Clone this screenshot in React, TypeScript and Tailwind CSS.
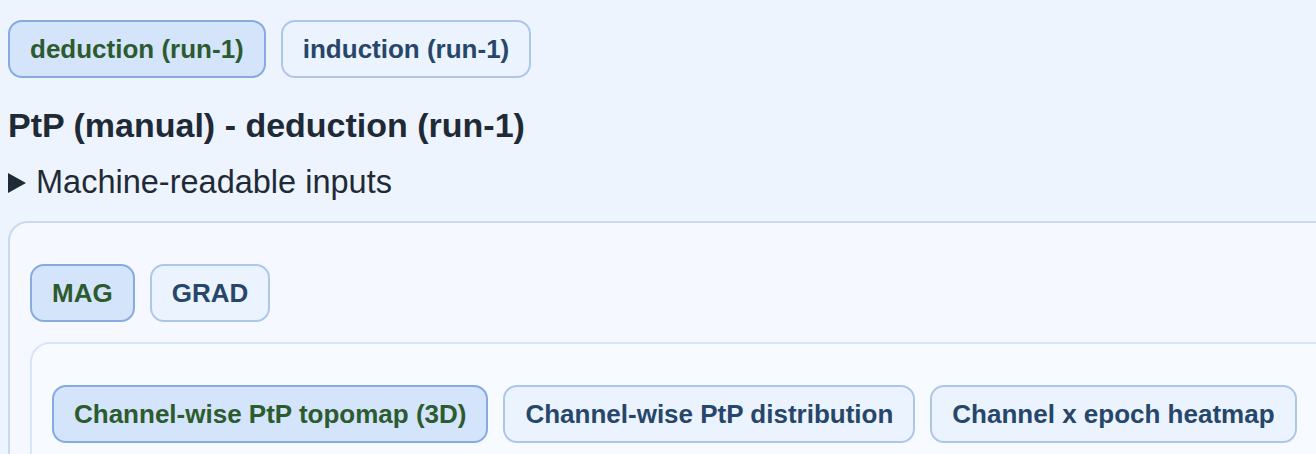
import React from "react";

const font = { fontFamily: '"Liberation Sans", Arial, Helvetica, sans-serif' };

function Btn({ label, active }: { label: string; active?: boolean }) {
  return (
    <button
      className={
        active
          ? "shrink-0 rounded-[14px] border-2 border-[#86abe0] bg-[#d4e4fb] px-[20px] py-[12px] text-[26px] font-bold leading-[30px] text-[#2c5b2f]"
          : "shrink-0 rounded-[14px] border-2 border-[#adc7ea] bg-[#ebf3fe] px-[20px] py-[12px] text-[26px] font-bold leading-[30px] text-[#27476a]"
      }
    >
      {label}
    </button>
  );
}

export default function App() {
  return (
    <div
      className="h-[454px] w-screen overflow-hidden bg-[#edf4fe] pl-[8px] pt-[20px]"
      style={font}
    >
      <div className="flex gap-[15px]">
        <Btn label="deduction (run-1)" active />
        <Btn label="induction (run-1)" />
      </div>
      <h3 className="mt-[28px] text-[34px] font-bold leading-[39px] text-[#1f2a37]">
        PtP (manual) - deduction (run-1)
      </h3>
      <div className="mt-[19px] flex items-center text-[32.5px] leading-[37px] text-[#1f2a37]">
        <svg width="18" height="20" viewBox="0 0 18 20" className="mr-[10px] shrink-0">
          <path d="M0 0 L18 10 L0 20 Z" fill="#1f2a37" />
        </svg>
        <span>Machine-readable inputs</span>
      </div>
      <div className="mt-[20px] w-[1400px] rounded-[20px] border-2 border-[#c8daf0] bg-[#f5f9ff] pl-[20px] pt-[41px]">
        <div className="flex gap-[15px]">
          <Btn label="MAG" active />
          <Btn label="GRAD" />
        </div>
        <div className="mt-[20px] rounded-[20px] border-2 border-[#d8e5f6] bg-[#f7faff] pl-[20px] pt-[41px] pb-[40px]">
          <div className="flex gap-[15px]">
            <Btn label="Channel-wise PtP topomap (3D)" active />
            <Btn label="Channel-wise PtP distribution" />
            <Btn label="Channel x epoch heatmap" />
          </div>
        </div>
      </div>
    </div>
  );
}
